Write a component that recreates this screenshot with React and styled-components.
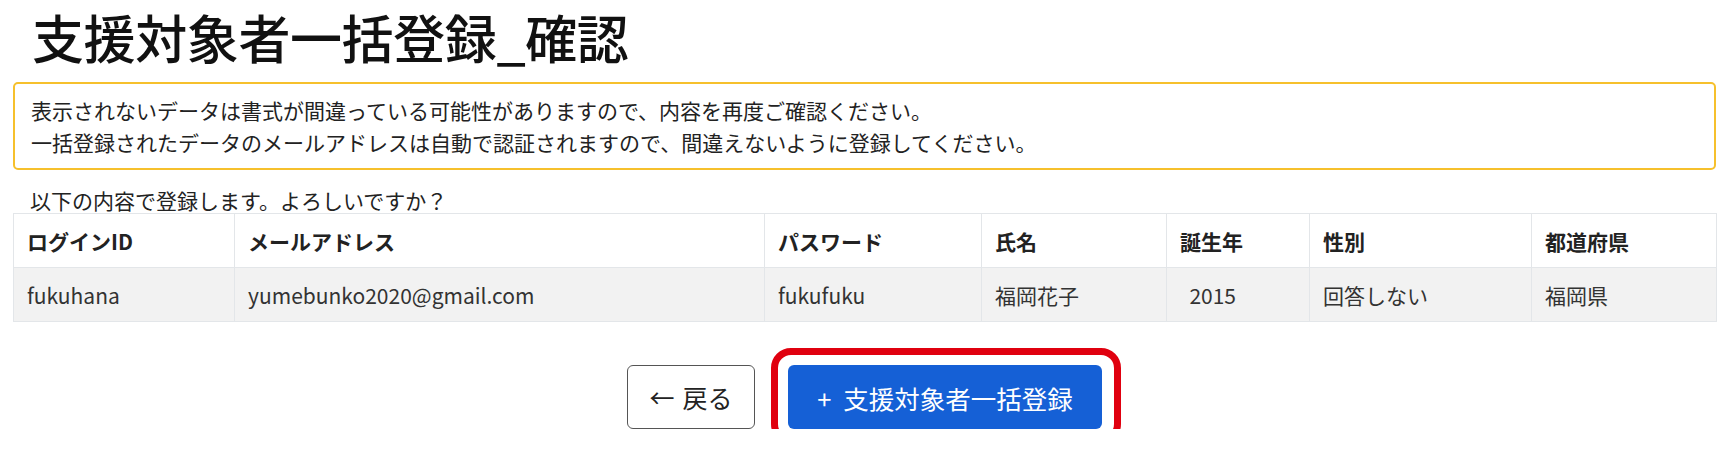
import React from "react";
import styled, { createGlobalStyle } from "styled-components";

const Global = createGlobalStyle`
  html, body { margin: 0; padding: 0; background: #fff; }
  body {
    font-family: "Noto Sans CJK JP", "Noto Sans", sans-serif;
    color: #212529;
  }
`;

const Page = styled.div`
  padding: 0 15px 0 13px;
`;

const Title = styled.h1`
  margin: 0;
  padding: 1px 0 0 19px;
  font-size: 52px;
  line-height: 72px;
  font-weight: 500;
  color: #111;
  letter-spacing: -0.4px;
`;

const Notice = styled.div`
  margin-top: 9px;
  border: 2px solid #f6c02c;
  border-radius: 5px;
  padding: 10px 16px 10px 16px;
  font-size: 21px;
  line-height: 32px;
  color: #222;
`;

const Lead = styled.p`
  margin: 17px 0 0 17px;
  font-size: 21px;
  line-height: 26px;
  color: #222;
`;

const Table = styled.table`
  width: 100%;
  table-layout: fixed;
  border-collapse: collapse;
  border: 1px solid #dee2e6;
  font-size: 21px;
`;

const Th = styled.th`
  box-sizing: border-box;
  width: ${(p) => p.$w}px;
  height: 54px;
  padding: 0 13px;
  text-align: left;
  font-weight: 700;
  color: #222;
  background: #fff;
  border: 1px solid #e3e6e9;
`;

const Td = styled.td`
  box-sizing: border-box;
  height: 54px;
  padding: 0 13px;
  color: #333;
  background: #f2f2f2;
  border: 1px solid #e3e6e9;
`;

const Actions = styled.div`
  display: flex;
  justify-content: center;
  gap: 33px;
  margin-top: 43px;
`;

const BackButton = styled.button`
  width: 128px;
  height: 64px;
  border: 1px solid #555;
  border-radius: 6px;
  background: #fff;
  color: #222;
  font-family: inherit;
  font-size: 25px;
  display: flex;
  align-items: center;
  justify-content: center;
  gap: 8px;
`;

const Highlight = styled.div`
  position: relative;
`;

const RedFrame = styled.span`
  position: absolute;
  inset: -17px -19px -15px -17px;
  border: 7px solid #e0000f;
  border-radius: 20px;
  pointer-events: none;
`;

const PrimaryButton = styled.button`
  width: 314px;
  height: 64px;
  border: none;
  border-radius: 6px;
  background: #1560d6;
  color: #fff;
  font-family: inherit;
  font-size: 25.5px;
  display: flex;
  align-items: center;
  justify-content: center;
  gap: 12px;
`;

const columns = [
  { label: "ログインID", w: 221, value: "fukuhana" },
  { label: "メールアドレス", w: 530, value: "yumebunko2020@gmail.com" },
  { label: "パスワード", w: 217, value: "fukufuku" },
  { label: "氏名", w: 185, value: "福岡花子" },
  { label: "誕生年", w: 143, value: "\u00a0\u00a02015" },
  { label: "性別", w: 222, value: "回答しない" },
  { label: "都道府県", w: 185, value: "福岡県" },
];

export default function App() {
  return (
    <Page>
      <Global />
      <Title>支援対象者一括登録_確認</Title>
      <Notice>
        表示されないデータは書式が間違っている可能性がありますので、内容を再度ご確認ください。
        <br />
        一括登録されたデータのメールアドレスは自動で認証されますので、間違えないように登録してください。
      </Notice>
      <Lead>以下の内容で登録します。よろしいですか？</Lead>
      <Table>
        <thead>
          <tr>
            {columns.map((c) => (
              <Th key={c.label} $w={c.w}>
                {c.label}
              </Th>
            ))}
          </tr>
        </thead>
        <tbody>
          <tr>
            {columns.map((c) => (
              <Td key={c.label}>{c.value}</Td>
            ))}
          </tr>
        </tbody>
      </Table>
      <Actions>
        <BackButton>
          <span>←</span>
          <span>戻る</span>
        </BackButton>
        <Highlight>
          <PrimaryButton>
            <span>+</span>
            <span>支援対象者一括登録</span>
          </PrimaryButton>
          <RedFrame />
        </Highlight>
      </Actions>
    </Page>
  );
}
